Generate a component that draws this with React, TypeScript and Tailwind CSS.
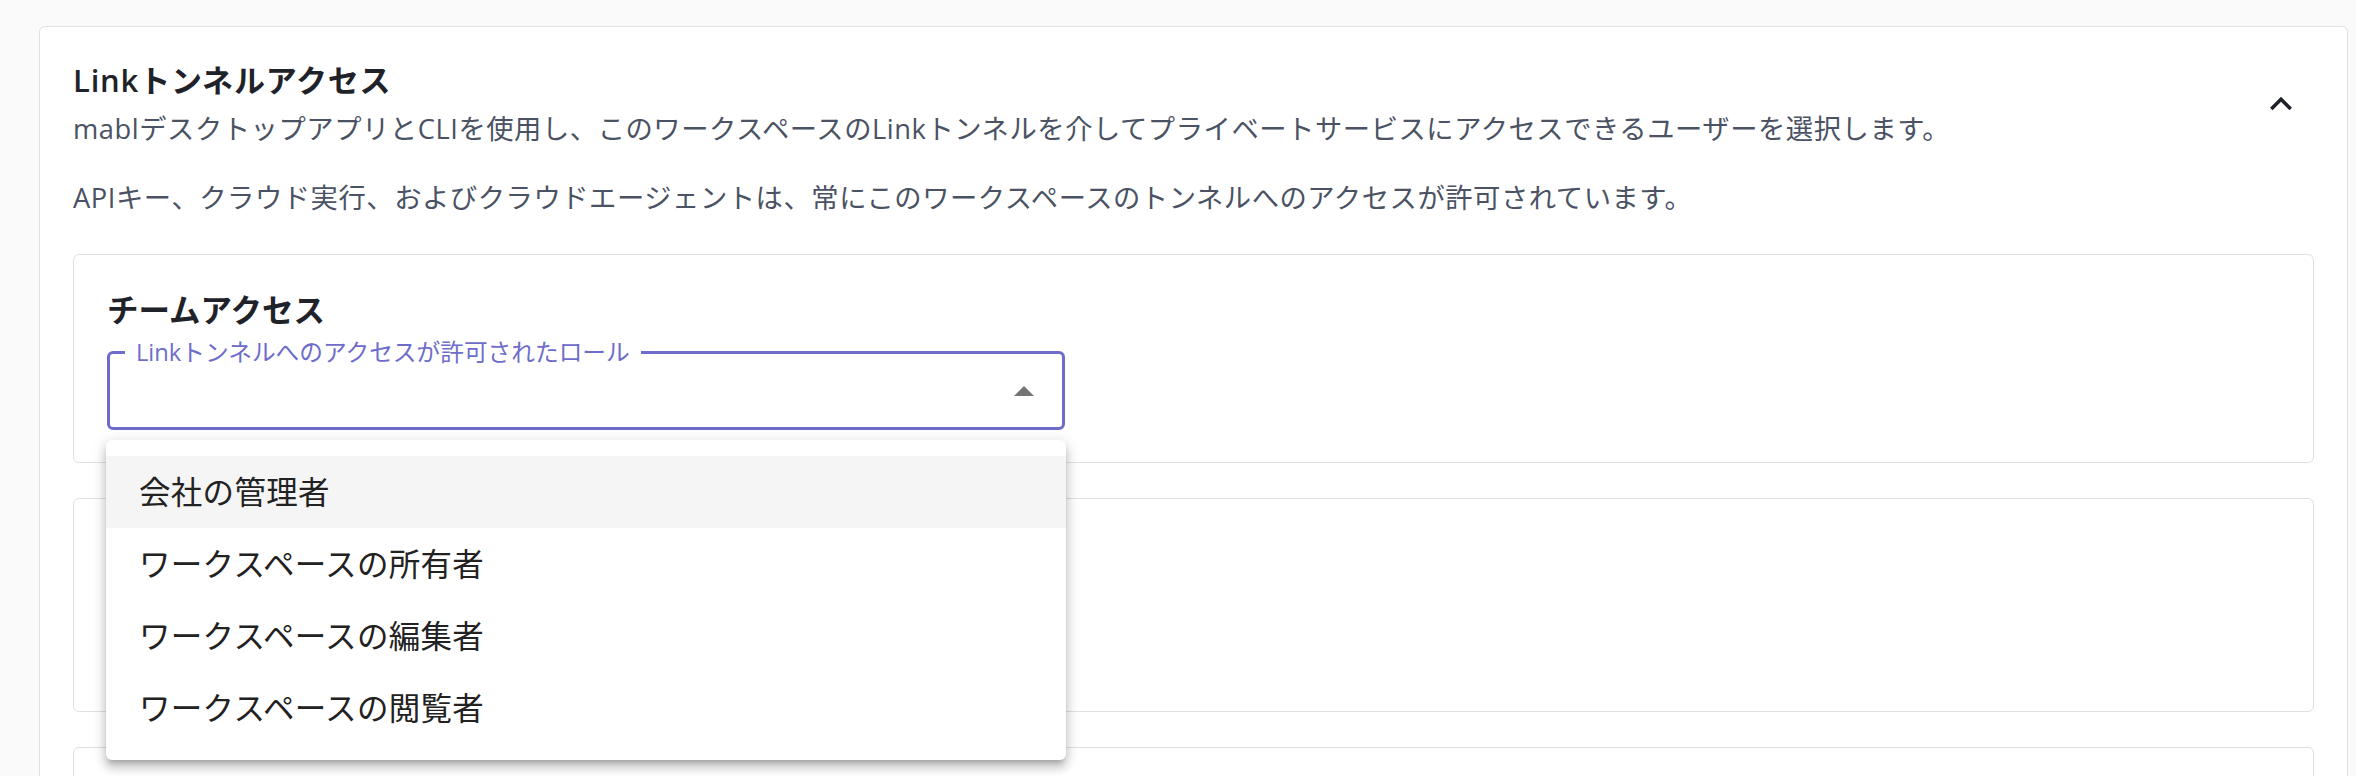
import React from "react";

const items = ["会社の管理者", "ワークスペースの所有者", "ワークスペースの編集者", "ワークスペースの閲覧者"];

export default function App() {
  return (
    <div className="min-h-screen bg-[#fafafa] pt-[26px] pl-[39px] pr-[8px] font-['Open_Sans','Noto_Sans_CJK_JP',sans-serif] overflow-hidden h-[776px]">
      <div className="bg-white border border-[#e0e0e0] rounded-[6px] px-[33px] pt-[31px] h-[820px]">
        <div className="flex items-center">
          <div className="flex-1">
            <h2 className="text-[31px] font-semibold leading-[44px] tracking-[0.8px] text-[#1f2329]">Linkトンネルアクセス</h2>
            <p className="mt-[6px] text-[27.3px] leading-[41px] tracking-[0.55px] text-[#4a5263]">
              mablデスクトップアプリとCLIを使用し、このワークスペースのLinkトンネルを介してプライベートサービスにアクセスできるユーザーを選択します。
            </p>
          </div>
          <button className="mr-[11px] w-[44px] h-[44px] flex items-center justify-center text-[#1f2329]">
            <svg width="44" height="44" viewBox="0 0 24 24" fill="currentColor">
              <path d="M12 8l-6 6 1.41 1.41L12 10.83l4.59 4.58L18 14z" />
            </svg>
          </button>
        </div>
        <p className="mt-[28px] text-[27.3px] leading-[41px] tracking-[0.55px] text-[#4a5263]">
          APIキー、クラウド実行、およびクラウドエージェントは、常にこのワークスペースのトンネルへのアクセスが許可されています。
        </p>
        <div className="mt-[36px] flex flex-col gap-[35px]">
          <div className="border border-[#e0e0e0] rounded-[6px] px-[33px] pt-[32px] pb-[32px]">
            <h3 className="text-[31.5px] font-bold leading-[46px] text-[#1f2329]">チームアクセス</h3>
            <div className="relative mt-[18px] w-[958px]">
              <div className="border-[3px] border-[#6e6ccb] rounded-[6px] h-[79px] flex items-center justify-end pr-[28px]">
                <svg width="20" height="10" viewBox="0 0 20 10">
                  <polygon points="0,10 10,0 20,10" fill="#757575" />
                </svg>
              </div>
              <span className="absolute left-[18px] top-[-11px] px-[11px] bg-white text-[23.7px] leading-[24px] text-[#6e6ccb] whitespace-nowrap">
                Linkトンネルへのアクセスが許可されたロール
              </span>
              <div className="absolute z-10 left-[-1px] top-[89px] w-[960px] bg-white rounded-[6px] py-[16px] shadow-[0_5px_5px_-3px_rgba(0,0,0,0.2),0_8px_10px_1px_rgba(0,0,0,0.14),0_3px_14px_2px_rgba(0,0,0,0.12)]">
                {items.map((t, i) => (
                  <div
                    key={t}
                    className={
                      i === 0
                        ? "h-[72px] flex items-center px-[33px] text-[31.5px] tracking-[0.3px] text-[#222222] bg-[#f5f5f5]"
                        : "h-[72px] flex items-center px-[33px] text-[31.5px] tracking-[0.3px] text-[#222222]"
                    }
                  >
                    {t}
                  </div>
                ))}
              </div>
            </div>
          </div>
          <div className="border border-[#e0e0e0] rounded-[6px] h-[214px]"></div>
          <div className="border border-[#e0e0e0] rounded-[6px] h-[200px]"></div>
        </div>
      </div>
    </div>
  );
}
